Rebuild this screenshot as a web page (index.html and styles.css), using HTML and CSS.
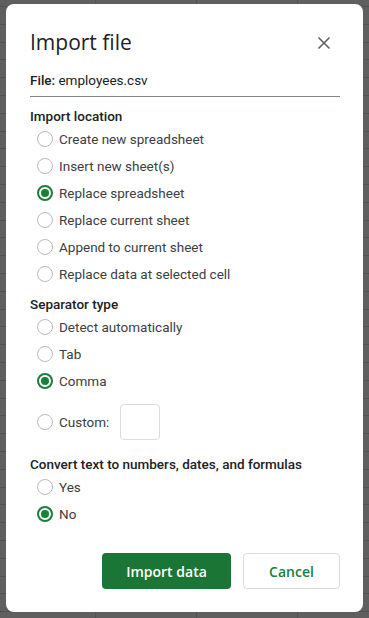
FILE: index.html
```html
<!DOCTYPE html>
<html lang="en">
<head>
    <meta charset="UTF-8">
    <meta name="viewport" content="width=device-width, initial-scale=1.0">
    <title>Import file</title>
    <link rel="stylesheet" href="styles.css">
</head>
<body>
    <div class="dialog">
        <div class="dialog-head">
            <h1>Import file</h1>
            <svg class="close" width="14" height="14" viewBox="0 0 14 14">
                <path d="M1.5 1.5 L12.5 12.5 M12.5 1.5 L1.5 12.5" stroke="#5f6368" stroke-width="1.6" fill="none"/>
            </svg>
        </div>

        <div class="file-name"><b>File:</b> employees.csv</div>

        <div class="section first">
            <div class="label">Import location</div>
            <div class="option"><span class="radio"></span>Create new spreadsheet</div>
            <div class="option"><span class="radio"></span>Insert new sheet(s)</div>
            <div class="option"><span class="radio checked"></span>Replace spreadsheet</div>
            <div class="option"><span class="radio"></span>Replace current sheet</div>
            <div class="option"><span class="radio"></span>Append to current sheet</div>
            <div class="option"><span class="radio"></span>Replace data at selected cell</div>
        </div>

        <div class="section">
            <div class="label">Separator type</div>
            <div class="option"><span class="radio"></span>Detect automatically</div>
            <div class="option"><span class="radio"></span>Tab</div>
            <div class="option"><span class="radio checked"></span>Comma</div>
            <div class="option custom"><span class="radio"></span>Custom:<span class="custom-box"></span></div>
        </div>

        <div class="section convert">
            <div class="label">Convert text to numbers, dates, and formulas</div>
            <div class="option"><span class="radio"></span>Yes</div>
            <div class="option"><span class="radio checked"></span>No</div>
        </div>

        <div class="actions">
            <button class="btn primary">Import data</button>
            <button class="btn secondary">Cancel</button>
        </div>
    </div>
</body>
</html>
```

FILE: styles.css
```css
body {
    margin: 0;
    width: 369px;
    height: 618px;
    overflow: hidden;
    font-family: Roboto, "Liberation Sans", sans-serif;
    font-size: 13.5px;
    color: #3c4043;
    background-color: #5f5f5f;
    background-image:
        repeating-linear-gradient(to right, transparent 0, transparent 95px, #525252 95px, #525252 96px, transparent 96px, transparent 101px),
        repeating-linear-gradient(to bottom, transparent 0, transparent 6px, #525252 6px, #525252 7px, transparent 7px, transparent 17.8px);
}
.dialog {
    margin: 4px 6px;
    width: 357px;
    height: 608px;
    box-sizing: border-box;
    padding: 24px 23px 0 24px;
    background: #fff;
    border-radius: 8px;
}
.dialog-head {
    display: flex;
    justify-content: space-between;
    align-items: center;
    height: 28px;
}
h1 {
    margin: 0;
    font-family: "Open Sans", sans-serif;
    font-weight: 400;
    font-size: 21px;
    line-height: 28px;
    color: #202124;
}
.close {
    margin-right: 9px;
    margin-top: 2px;
}
.file-name {
    margin-top: 14px;
    line-height: 20px;
    padding-bottom: 6px;
    border-bottom: 1px solid #80868b;
    color: #202124;
}
.file-name b {
    font-weight: 500;
}
.section {
    margin-top: 9px;
}
.section.first {
    margin-top: 11px;
}
.section.convert {
    margin-top: 16px;
}
.label {
    line-height: 17px;
    font-weight: 500;
    color: #202124;
}
.option {
    display: flex;
    align-items: center;
    height: 27px;
    color: #3c4043;
}
.option.custom {
    height: 46px;
    padding-top: 10px;
    box-sizing: border-box;
}
.radio {
    width: 16px;
    height: 16px;
    box-sizing: border-box;
    border: 1.5px solid #b9b9b9;
    border-radius: 50%;
    margin: 0 6px 0 7px;
    display: flex;
    align-items: center;
    justify-content: center;
}
.radio.checked {
    border: 2px solid #188038;
}
.radio.checked::after {
    content: "";
    width: 8px;
    height: 8px;
    border-radius: 50%;
    background: #188038;
}
.custom-box {
    width: 40px;
    height: 36px;
    box-sizing: border-box;
    border: 1px solid #dadce0;
    border-radius: 4px;
    margin-left: 11px;
}
.actions {
    display: flex;
    justify-content: flex-end;
    gap: 12px;
    margin-top: 26px;
}
.btn {
    height: 36px;
    border-radius: 4px;
    font-family: "Open Sans", sans-serif;
    font-size: 14px;
    font-weight: 600;
    cursor: pointer;
}
.primary {
    width: 129px;
    background: #1b7636;
    color: #fff;
    border: none;
}
.secondary {
    width: 97px;
    background: #fff;
    color: #188038;
    border: 1px solid #dadce0;
}
```
